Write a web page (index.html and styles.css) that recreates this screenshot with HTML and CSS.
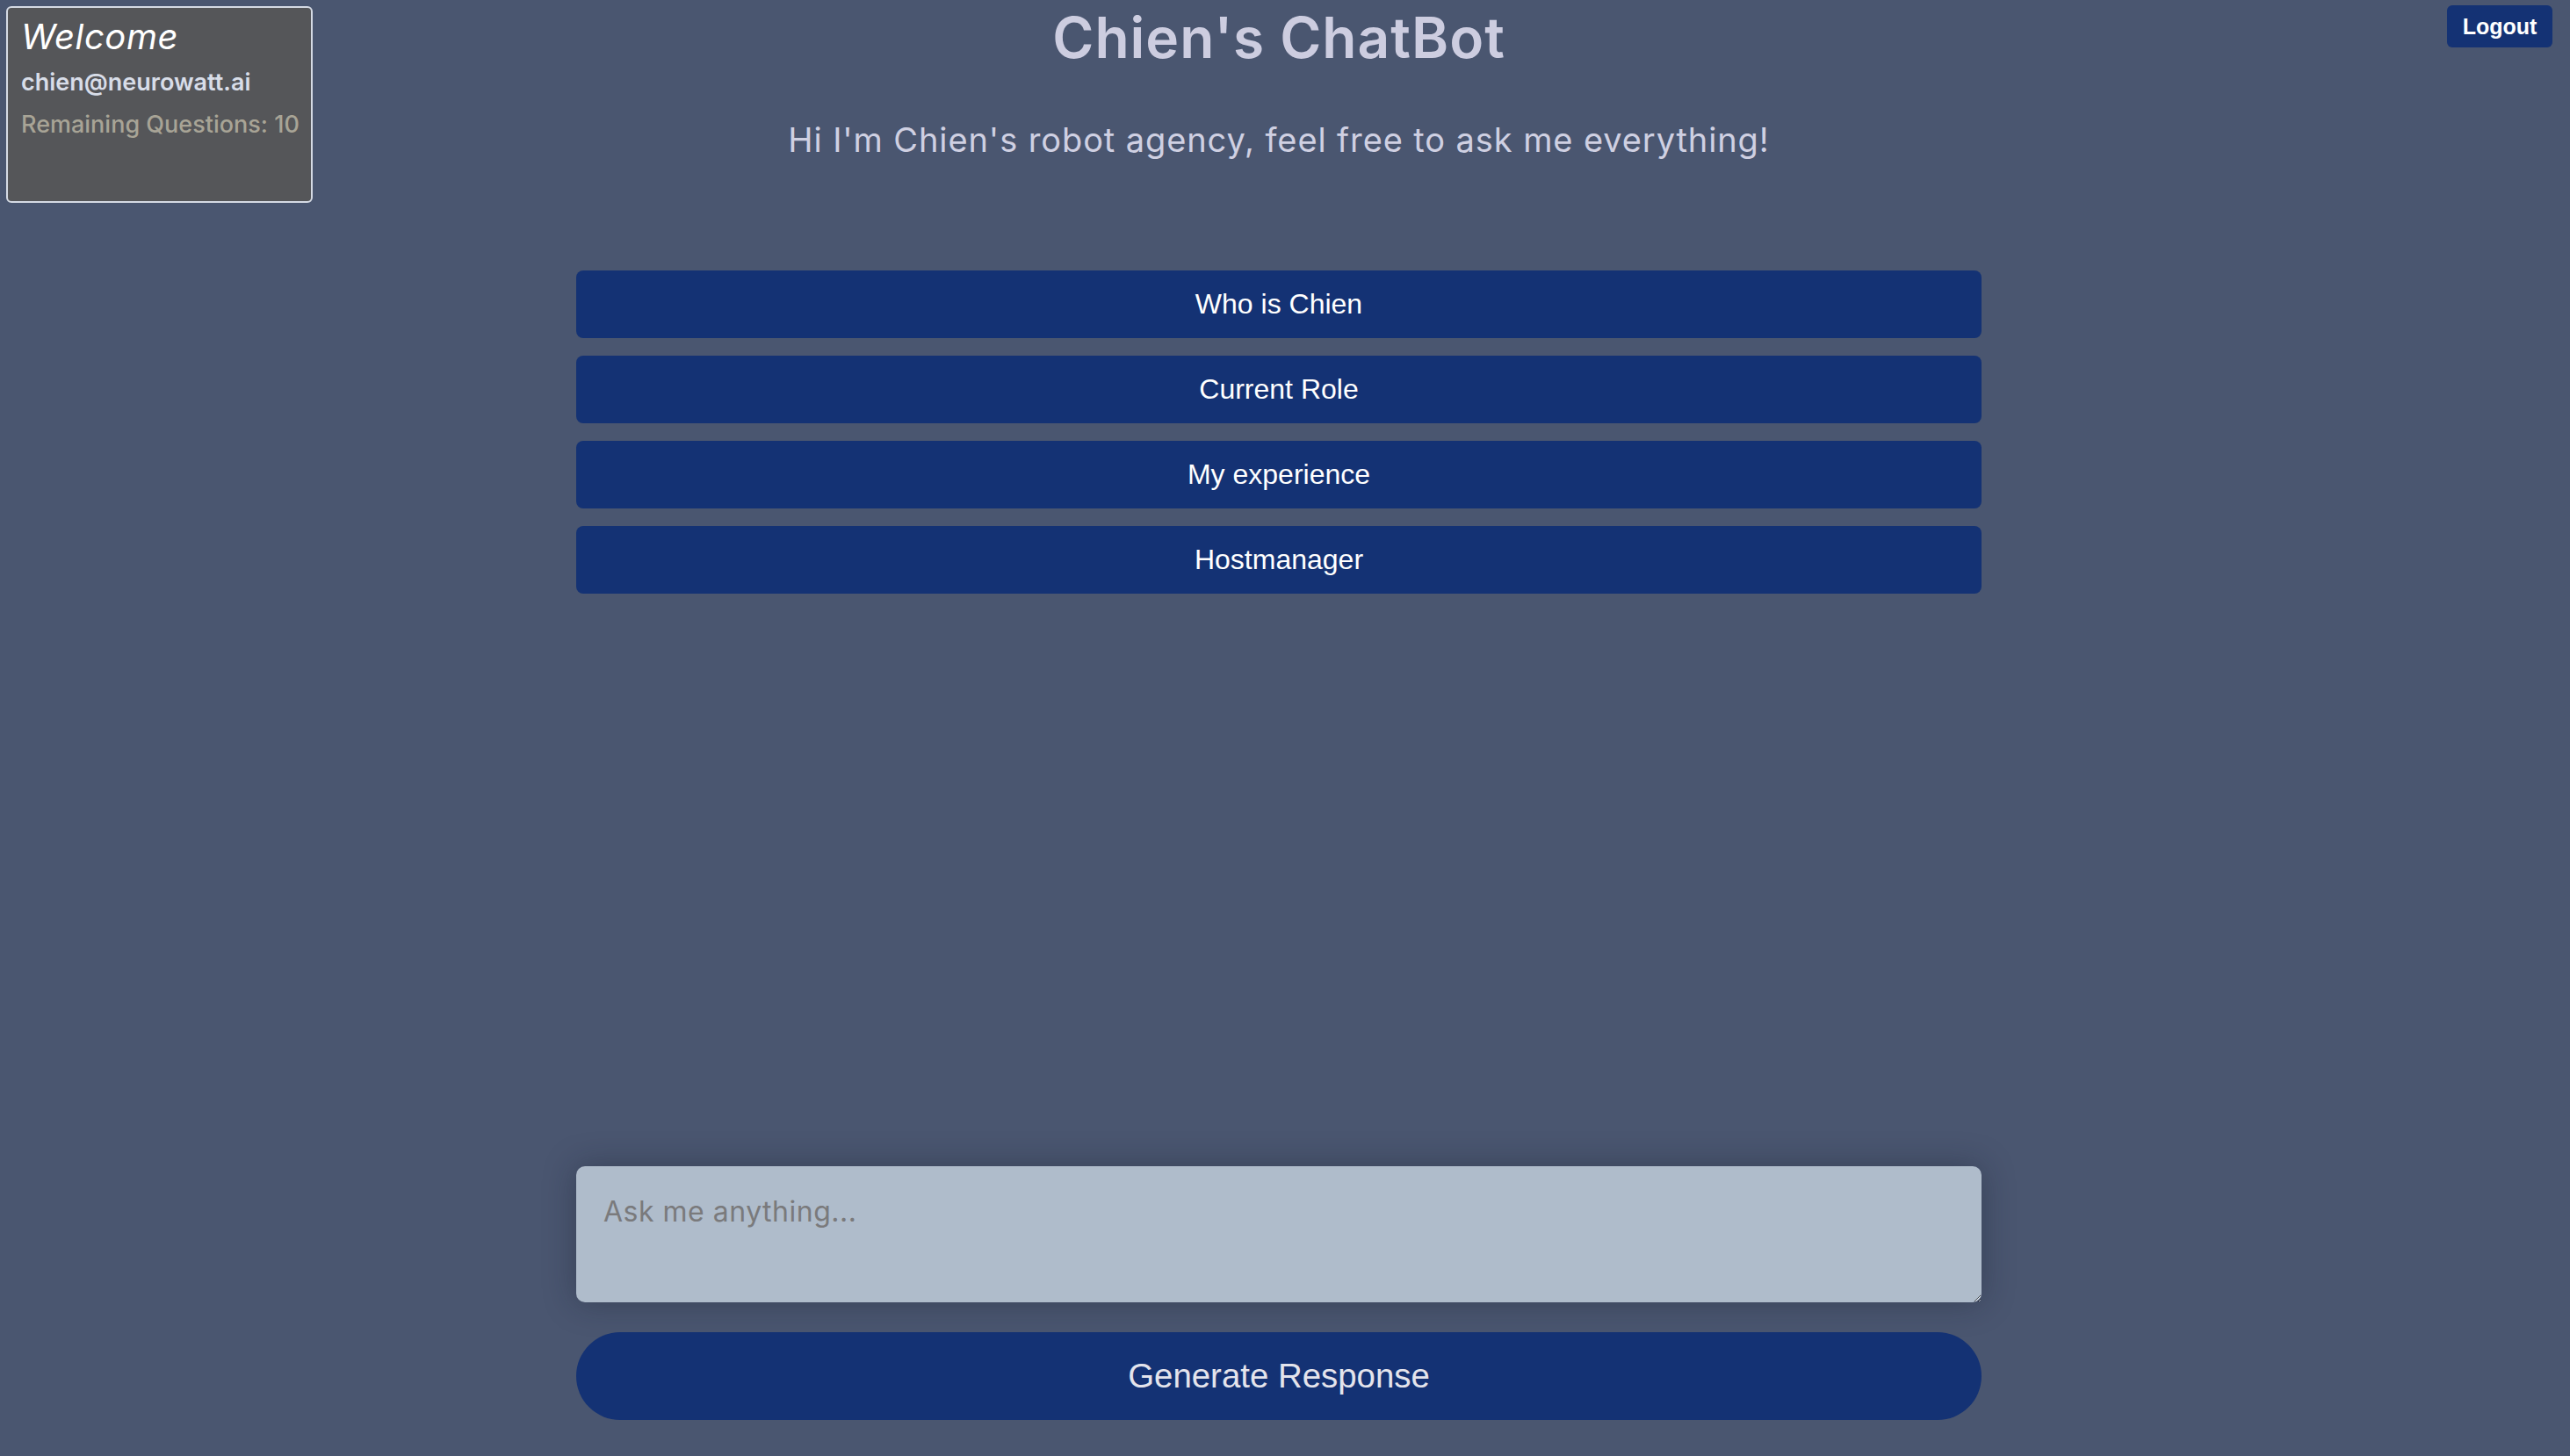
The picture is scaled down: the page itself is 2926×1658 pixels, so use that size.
FILE: index.html
```html
<!DOCTYPE html>
<html lang="en">
<head>
<meta charset="utf-8">
<title>Chien's ChatBot</title>
<link rel="stylesheet" href="styles.css">
</head>
<body>
<aside class="welcome">
  <div class="welcome-title">Welcome</div>
  <div class="welcome-email">chien@neurowatt.ai</div>
  <div class="welcome-remaining">Remaining Questions: 10</div>
</aside>
<button class="logout">Logout</button>
<main class="page">
  <header class="header">
    <h1 class="title">Chien's ChatBot</h1>
    <p class="subtitle">Hi I'm Chien's robot agency, feel free to ask me everything!</p>
  </header>
  <nav class="suggestions">
    <button class="suggestion">Who is Chien</button>
    <button class="suggestion">Current Role</button>
    <button class="suggestion">My experience</button>
    <button class="suggestion">Hostmanager</button>
  </nav>
  <section class="chat"></section>
  <div class="composer">
    <textarea class="prompt" placeholder="Ask me anything..."></textarea>
    <button class="generate">Generate Response</button>
  </div>
</main>
</body>
</html>
```

FILE: styles.css
```css
html, body {
  margin: 0;
  padding: 0;
  height: 100%;
}
body {
  background: #4a5670;
  font-family: Inter, "Noto Sans", sans-serif;
  overflow: hidden;
}
.page {
  box-sizing: border-box;
  height: 100vh;
  display: flex;
  flex-direction: column;
  align-items: center;
  padding: 0 14px 41px 0;
}
.header {
  display: flex;
  flex-direction: column;
  align-items: center;
}
.title {
  margin: 0;
  font-size: 64px;
  font-weight: 600;
  letter-spacing: 1px;
  line-height: 86px;
  color: #cdcde0;
}
.subtitle {
  margin: 48px 0 0;
  font-size: 38px;
  font-weight: 400;
  letter-spacing: 0.9px;
  line-height: 50px;
  color: #cfd0e2;
}
.suggestions {
  width: 1600px;
  margin-top: 124px;
  display: flex;
  flex-direction: column;
  gap: 20px;
}
.suggestion {
  height: 77px;
  border: none;
  border-radius: 8px;
  background: #143274;
  color: #ffffff;
  font-family: "Liberation Sans", Arial, sans-serif;
  font-size: 32px;
  padding: 0;
}
.chat {
  flex: 1;
}
.composer {
  width: 1600px;
  display: flex;
  flex-direction: column;
  gap: 34px;
}
.prompt {
  box-sizing: border-box;
  height: 155px;
  width: 100%;
  border: none;
  border-radius: 10px;
  background: #afbccb;
  padding: 32px 31px 20px;
  font-family: Inter, "Noto Sans", sans-serif;
  font-size: 32px;
  letter-spacing: 0.5px;
  color: #333;
  box-shadow: 0 0 36px rgba(20, 25, 40, 0.35);
  outline: none;
}
.prompt::placeholder {
  color: #7a7a7c;
}
.generate {
  height: 100px;
  border: none;
  border-radius: 50px;
  background: #143274;
  color: #e4e4ec;
  font-family: "Liberation Sans", Arial, sans-serif;
  font-size: 38.4px;
}
.welcome {
  position: absolute;
  top: 7px;
  left: 7px;
  box-sizing: border-box;
  width: 349px;
  height: 224px;
  border: 2px solid #d5dae4;
  border-radius: 6px;
  background: #555659;
  padding: 8px 0 0 15px;
}
.welcome-title {
  font-style: italic;
  font-size: 40px;
  letter-spacing: 0.6px;
  line-height: 50px;
  color: #ffffff;
}
.welcome-email {
  margin-top: 9px;
  font-size: 27px;
  font-weight: 600;
  line-height: 36px;
  color: #d8dde8;
}
.welcome-remaining {
  margin-top: 12px;
  font-size: 27px;
  font-weight: 500;
  line-height: 36px;
  color: #a8a496;
}
.logout {
  position: absolute;
  top: 6px;
  right: 20px;
  width: 120px;
  height: 48px;
  border: none;
  border-radius: 6px;
  background: #143274;
  color: #ffffff;
  font-family: "Liberation Sans", Arial, sans-serif;
  font-weight: 700;
  font-size: 25px;
  padding: 0;
}
```
